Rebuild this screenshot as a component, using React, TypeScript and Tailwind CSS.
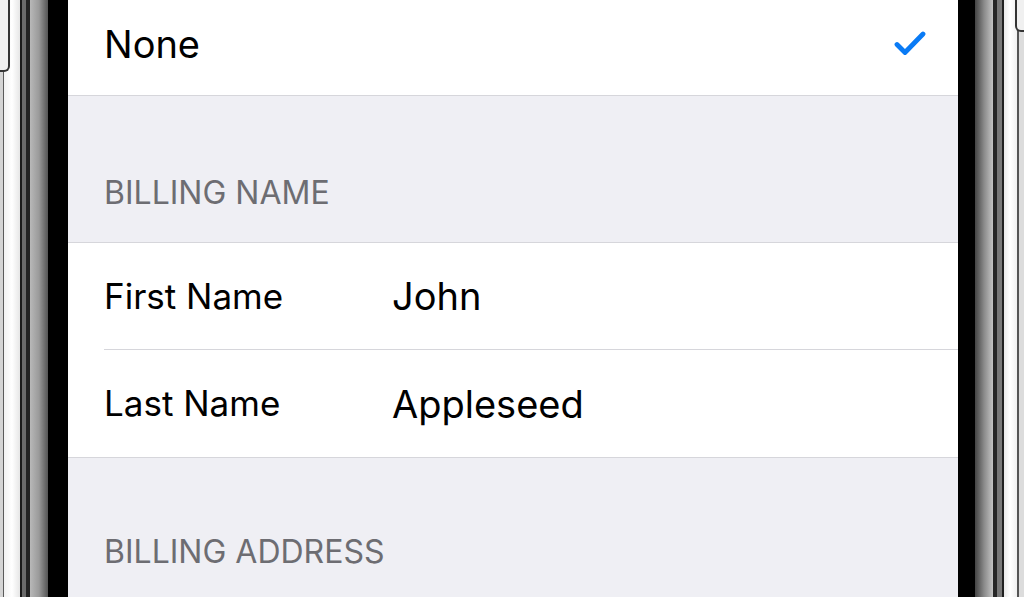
const font = { fontFamily: "Inter, 'Noto Sans', 'Liberation Sans', sans-serif" };

function LeftBezel() {
  return (
    <div className="relative flex h-full w-[68px] shrink-0">
      <div className="w-[3px] bg-[#d4d4d4]" />
      <div className="w-[1px] bg-[#5a5a5a]" />
      <div className="w-[16px] bg-gradient-to-r from-[#f2f2f2] via-[#ffffff] to-[#e6e6e6]" />
      <div className="w-[2px] bg-[#1a1a1a]" />
      <div className="w-[4px] bg-[#6a6a6a]" />
      <div className="w-[4px] bg-[#222]" />
      <div className="w-[18px] bg-gradient-to-r from-[#b8b8b8] via-[#9a9a9a] to-[#555]" />
      <div className="w-[20px] bg-black" />
      {/* side button */}
      <div className="absolute left-0 top-[-12px] h-[84px] w-[10px] rounded-br-[6px] border-b-2 border-r-2 border-[#333] bg-[#f0f0f0]" />
    </div>
  );
}

function RightBezel() {
  return (
    <div className="relative flex h-full w-[66px] shrink-0">
      <div className="w-[17px] bg-black" />
      <div className="w-[18px] bg-gradient-to-r from-[#444] via-[#8a8a8a] to-[#c4c4c4]" />
      <div className="w-[4px] bg-[#262626]" />
      <div className="w-[5px] bg-[#777]" />
      <div className="w-[2px] bg-[#1e1e1e]" />
      <div className="w-[13px] bg-gradient-to-r from-[#e8e8e8] via-[#ffffff] to-[#f0f0f0]" />
      <div className="w-[2px] bg-[#555]" />
      <div className="w-[5px] bg-[#dcdcdc]" />
      {/* side button */}
      <div className="absolute right-0 top-[-12px] h-[44px] w-[9px] rounded-bl-[6px] border-b-2 border-l-2 border-[#333] bg-[#f0f0f0]" />
    </div>
  );
}

function SectionHeader({ title, height, pb }: { title: string; height: string; pb: string }) {
  return (
    <div className={`flex items-end bg-[#efeff4] pl-[36px] ${height} ${pb}`}>
      <span className="text-[32px] leading-none text-[#6d6d72]">{title}</span>
    </div>
  );
}

function FieldRow({ label, value, last }: { label: string; value: string; last?: boolean }) {
  return (
    <div className="bg-white pl-[36px]">
      <div
        className={`flex h-[107px] items-center ${last ? "" : "border-b border-[#d6d6db]"}`}
      >
        <span className="w-[288px] shrink-0 text-[35px] leading-none text-black">{label}</span>
        <span className="text-[38px] leading-none text-black">{value}</span>
      </div>
    </div>
  );
}

export default function App() {
  return (
    <div className="flex h-[597px] w-[1024px] overflow-hidden bg-white" style={font}>
      <LeftBezel />

      <div className="flex min-w-0 flex-1 flex-col bg-[#efeff4]">
        {/* selected option */}
        <div className="flex h-[96px] shrink-0 items-center justify-between border-b border-[#d6d6db] bg-white pb-[8px] pl-[36px] pr-[32px]">
          <span className="text-[38px] leading-none text-black">None</span>
          <svg width="32" height="28" viewBox="0 0 32 28" fill="none">
            <path
              d="M3 14.5 L11 22.5 L29 4"
              stroke="#0a7bf5"
              strokeWidth="4.8"
              strokeLinecap="round"
              strokeLinejoin="round"
            />
          </svg>
        </div>

        <div className="border-b border-[#d6d6db]">
          <SectionHeader title="BILLING NAME" height="h-[146px]" pb="pb-[33px]" />
        </div>

        <div className="border-b border-[#d6d6db]">
          <FieldRow label="First Name" value="John" />
          <FieldRow label="Last Name" value="Appleseed" last />
        </div>

        <SectionHeader title="BILLING ADDRESS" height="h-[140px]" pb="pb-[29px]" />
      </div>

      <RightBezel />
    </div>
  );
}
